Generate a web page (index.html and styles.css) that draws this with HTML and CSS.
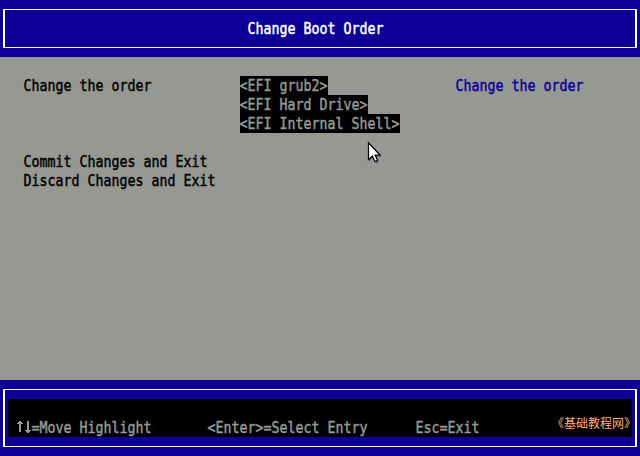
FILE: index.html
```html
<!DOCTYPE html>
<html lang="en">
<head>
<meta charset="utf-8">
<title>Change Boot Order</title>
<link rel="stylesheet" href="styles.css">
</head>
<body>
<div class="screen">
  <header class="header">
    <div class="frame title-frame"><h1 class="line"><span class="glyphs">Change Boot Order</span></h1></div>
  </header>
  <main class="form">
    <section class="options">
      <div class="line"><span class="glyphs">Change the order</span></div>
      <div class="actions">
        <div class="line"><span class="glyphs">Commit Changes and Exit</span></div>
        <div class="line"><span class="glyphs">Discard Changes and Exit</span></div>
      </div>
    </section>
    <section class="values">
      <div class="line value"><span class="glyphs">&lt;EFI grub2&gt;</span></div>
      <div class="line value"><span class="glyphs">&lt;EFI Hard Drive&gt;</span></div>
      <div class="line value"><span class="glyphs">&lt;EFI Internal Shell&gt;</span></div>
    </section>
    <aside class="help"><div class="line"><span class="glyphs">Change the order</span></div></aside>
  </main>
  <footer class="footer">
    <div class="frame key-frame">
      <div class="keys">
        <div class="line"><span class="arrows"><svg width="16" height="19" viewBox="0 0 16 19" shape-rendering="crispEdges" fill="currentColor"><path d="M3 3h2v11h-2zM2 4h4v1h-4zM1 5h6v1h-6zM11 3h2v12h-2zM9 12h6v1h-6zM10 13h4v1h-4z"/></svg></span><span class="glyphs">=Move Highlight</span></div>
        <div class="line"><span class="glyphs">&lt;Enter&gt;=Select Entry</span></div>
        <div class="line"><span class="glyphs">Esc=Exit</span></div>
      </div>
    </div>
  </footer>
  <div class="watermark" lang="zh-CN">《基础教程网》</div>
  <svg class="cursor" width="18" height="24" viewBox="0 0 18 24"><path class="cursor-shadow" d="M2 2v18.500l4-3.500 3 5.500 3-1-2.500-5.500h5z"/><path class="cursor-body" d="M1.500 1.800v16.700l3.900-3.600 2.500 5.600 2.700-1.300-2.500-5.200h4.900z"/></svg>
</div>
</body>
</html>
```
FILE: styles.css
```css
* { box-sizing: border-box; }
body { margin: 0; background: #0c0096; }
.screen {
  position: relative;
  display: grid;
  grid-template-rows: 57px 323px 76px;
  width: 640px;
  height: 456px;
  overflow: hidden;
  font: 13.29px "DejaVu Sans Mono", monospace;
}
.line { display: flex; height: 19px; margin: 0; font: inherit; line-height: 19px; white-space: pre; }
.glyphs {
  display: block;
  height: 19px;
  transform: translate(-0.5px, 1px) scaleY(1.23);
  transform-origin: 0 14px;
  -webkit-text-stroke: 0.4px currentColor;
}
.header { padding: 9px 3px; background: #0c0096; color: #fff; }
.frame { border: solid #fff; border-width: 1px 2px; }
.title-frame { display: flex; justify-content: center; height: 39px; padding: 9px 8px 0 0; }
.form {
  display: grid;
  grid-template-columns: 216px 216px 1fr;
  padding: 19px 0 0 24px;
  background: #969894;
  color: #000;
}
.actions { margin-top: 57px; }
.value { width: max-content; background: #000; color: #969894; }
.help { color: #0c0096; }
.footer { padding: 9px 3px; background: #0c0096; }
.key-frame { height: 58px; padding: 9px 3px; }
.keys {
  display: grid;
  grid-template-columns: 192px 208px 1fr;
  height: 38px;
  padding: 19px 0 0 8px;
  background: #000;
  color: #969894;
}
.arrows { width: 16px; height: 19px; }
.arrows svg { display: block; }
.watermark {
  position: absolute;
  left: 552px;
  top: 414px;
  color: #ffad78;
  font: 12px/18px "Noto Sans CJK SC", sans-serif;
  white-space: nowrap;
}
.cursor { position: absolute; left: 367px; top: 141px; }
.cursor-shadow { fill: rgba(0, 0, 0, 0.35); }
.cursor-body { fill: #fff; stroke: #000; stroke-width: 1.2; }
```
